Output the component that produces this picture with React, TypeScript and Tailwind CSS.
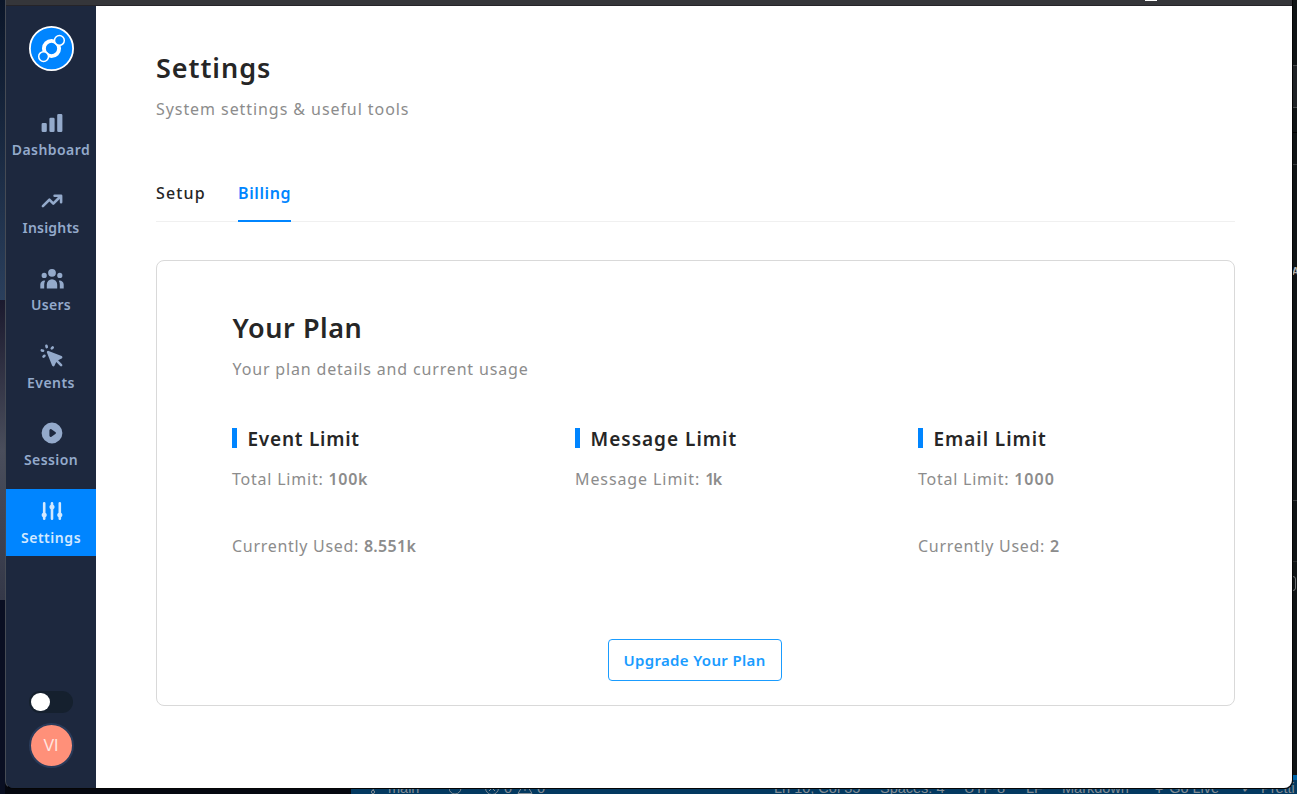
import type { IconType } from "react-icons";
import {
  HiAdjustments,
  HiChartBar,
  HiCursorClick,
  HiPlay,
  HiTrendingUp,
  HiUserGroup,
} from "react-icons/hi";

type NavEntry = { label: string; icon: IconType; tracking: string; active?: boolean };

const nav: NavEntry[] = [
  { label: "Dashboard", icon: HiChartBar, tracking: "tracking-[0.45px]" },
  { label: "Insights", icon: HiTrendingUp, tracking: "tracking-[0.2px]" },
  { label: "Users", icon: HiUserGroup, tracking: "tracking-[0.25px]" },
  { label: "Events", icon: HiCursorClick, tracking: "tracking-[0.45px]" },
  { label: "Session", icon: HiPlay, tracking: "tracking-[0.4px]" },
  { label: "Settings", icon: HiAdjustments, tracking: "tracking-[0.55px]", active: true },
];

function Logo() {
  return (
    <svg className="size-[45px] shrink-0" viewBox="0 0 45 45">
      <circle cx="22.5" cy="22.5" r="21.6" fill="#0085ff" stroke="#fff" strokeWidth="1.8" />
      <circle cx="22.5" cy="22.5" r="7.6" fill="none" stroke="#fff" strokeWidth="3.9" />
      <circle cx="30.4" cy="14.4" r="4.9" fill="#0085ff" stroke="#fff" strokeWidth="1.5" />
      <circle cx="14.6" cy="30.6" r="4.9" fill="#0085ff" stroke="#fff" strokeWidth="1.5" />
    </svg>
  );
}

function NavItem({ label, icon: Icon, tracking, active }: NavEntry) {
  return (
    <a
      className={`flex h-[67px] w-full flex-col items-center pt-[9px] ${
        active ? "bg-[#0085ff] text-[#d3e9ff]" : "text-[#94aacb]"
      }`}
    >
      <Icon className="ml-px size-[26px] shrink-0" />
      <span className={`mt-1 text-sm leading-5 font-semibold whitespace-nowrap ${tracking}`}>
        {label}
      </span>
    </a>
  );
}

function Sidebar() {
  return (
    <aside className="flex w-[90px] shrink-0 flex-col items-center rounded-bl-lg bg-[#1d283e] pt-5">
      <Logo />
      <nav className="mt-[30px] flex w-full flex-col gap-[10.6px]">
        {nav.map((item) => (
          <NavItem key={item.label} {...item} />
        ))}
      </nav>
      <div className="mt-auto mb-5 flex flex-col items-center gap-[10px]">
        <div className="flex h-[22px] w-11 items-center rounded-full bg-[#15202e] pl-[2px]">
          <div className="size-[18.5px] rounded-full bg-white" />
        </div>
        <div className="flex size-[45px] items-center justify-center rounded-full border-2 border-[#293b5a] bg-[#ff9079] font-['Liberation_Sans'] text-base text-[#ffe6e0]">
          VI
        </div>
      </div>
    </aside>
  );
}

type Line = { label: string; labelTracking: string; value: string; valueTracking: string };
type Limit = { title: string; titleTracking: string; lines: Line[] };

const limits: Limit[] = [
  {
    title: "Event Limit",
    titleTracking: "tracking-[0.76px]",
    lines: [
      { label: "Total Limit: ", labelTracking: "tracking-[0.78px]", value: "100k", valueTracking: "tracking-[0.7px]" },
      { label: "Currently Used: ", labelTracking: "tracking-[0.7px]", value: "8.551k", valueTracking: "tracking-[0.3px]" },
    ],
  },
  {
    title: "Message Limit",
    titleTracking: "tracking-[1px]",
    lines: [
      { label: "Message Limit: ", labelTracking: "tracking-[0.9px]", value: "1k", valueTracking: "tracking-[-1.5px]" },
    ],
  },
  {
    title: "Email Limit",
    titleTracking: "tracking-[0.95px]",
    lines: [
      { label: "Total Limit: ", labelTracking: "tracking-[0.76px]", value: "1000", valueTracking: "tracking-[1px]" },
      { label: "Currently Used: ", labelTracking: "tracking-[0.7px]", value: "2", valueTracking: "tracking-[0.3px]" },
    ],
  },
];

function LimitColumn({ title, titleTracking, lines }: Limit) {
  return (
    <div className="flex flex-col">
      <div className="flex gap-[10.5px]">
        <div className="h-5 w-[5px] bg-[#0085ff]" />
        <h3 className={`-mb-1 pt-px text-[19px] leading-5 font-semibold text-[#262626] ${titleTracking}`}>{title}</h3>
      </div>
      <div className="mt-[19px] flex flex-col gap-[43px]">
        {lines.map((line) => (
          <p key={line.label} className="text-base leading-6 whitespace-pre text-[#8c8c8c]">
            <span className={line.labelTracking}>{line.label}</span>
            <span className={`font-semibold ${line.valueTracking}`}>{line.value}</span>
          </p>
        ))}
      </div>
    </div>
  );
}

function Settings() {
  return (
    <main className="flex grow flex-col rounded-br-lg bg-white pt-11 pr-[57px] pl-[60px]">
      <h1 className="text-[27px] leading-9 font-semibold tracking-[0.95px] text-[#262626]">Settings</h1>
      <p className="mt-[11px] text-base leading-6 tracking-[0.93px] text-[#8c8c8c]">System settings &amp; useful tools</p>

      <div className="mt-[60px] flex gap-[33px] border-b border-[#f0f0f0] text-base leading-6">
        <div className="w-[49px] pb-4 font-medium tracking-[1.15px] text-[#262626]">Setup</div>
        <div className="-mb-px h-[41px] w-[53px] border-b-2 border-[#0085ff] font-semibold tracking-[0.6px] text-[#0085ff]">
          Billing
        </div>
      </div>

      <section className="mt-[38px] flex h-[446px] flex-col rounded-lg border border-[#d9d9d9] px-[75px] pt-[49px]">
        <h2 className="pl-[0.6px] text-[27px] leading-9 font-semibold tracking-[0.55px] text-[#262626]">Your Plan</h2>
        <p className="mt-[11px] pl-[0.6px] text-base leading-6 tracking-[0.83px] text-[#8c8c8c]">
          Your plan details and current usage
        </p>
        <div className="mt-[47px] grid grid-cols-[343px_343px_auto]">
          {limits.map((limit) => (
            <LimitColumn key={limit.title} {...limit} />
          ))}
        </div>
        <button className="mt-auto mr-[2px] mb-6 flex h-[42px] w-[174px] items-center justify-center self-center rounded border border-[#1a9cff] text-[15px] font-semibold tracking-[0.34px] whitespace-nowrap text-[#1a9cff]">
          Upgrade Your Plan
        </button>
      </section>
    </main>
  );
}

function EditorBackdrop() {
  return (
    <>
      <div className="absolute top-0 left-0 h-[300px] w-[5px] bg-linear-to-b from-[#0b1629] to-[#2a3f5c]" />
      <div className="absolute top-[300px] left-0 h-[300px] w-[5px] bg-linear-to-b from-[#1b1a2e] via-[#4a4e5c] to-[#343848]" />
      <div className="absolute top-[600px] left-0 h-[194px] w-[5px] bg-[#0a0f22]" />
      <div className="absolute top-0 right-0 h-[775px] w-1 bg-[#101415]" />
      <div className="absolute top-[65px] right-0 h-[43px] w-1 border-y border-[#4a4c4e] bg-[#1f2225]" />
      <div className="absolute top-[132px] right-0 h-px w-1 bg-black" />
      <div className="absolute top-[164px] right-0 h-px w-1 bg-[#3a3c3e]" />
      <div className="absolute top-[265px] left-[1292px] text-[10px] leading-3 font-bold text-[#b0b0b0]">A</div>
      <div className="absolute top-[500px] right-0 h-px w-1 bg-[#3a3c3e]" />
      <div className="absolute top-[561px] right-0 h-px w-1 bg-[#2a2c2e]" />
      <div className="absolute top-[576px] left-[1290px] h-[15px] w-[6px] rounded-sm border border-[#707274]" />
      <div className="absolute top-[775px] right-0 h-[19px] w-1 bg-[#0064a8]" />
      <div className="absolute top-[780px] left-[351px] h-[14px] w-[946px] bg-[#033960] font-['Liberation_Sans'] text-[14.5px] text-[#828c94]">
        <div className="flex h-4 items-center leading-4 whitespace-nowrap">
          <svg className="ml-[18px] size-4" viewBox="0 0 16 16" fill="none" stroke="currentColor">
            <circle cx="4" cy="12" r="1.6" />
            <path d="M4 10c0-3 7-1 8-6" />
          </svg>
          <span className="ml-[3px] w-[61px]">main</span>
          <svg className="size-3.5" viewBox="0 0 14 14" fill="none" stroke="currentColor">
            <circle cx="6" cy="7" r="6" />
          </svg>
          <svg className="ml-[21px] size-4" viewBox="0 0 16 16" fill="none" stroke="currentColor">
            <circle cx="8" cy="8" r="6.5" />
            <path d="m5 5 6 6m0-6-6 6" />
          </svg>
          <span className="ml-1 w-[13px]">0</span>
          <svg className="size-4" viewBox="0 0 16 16" fill="none" stroke="currentColor">
            <path d="M1 13.5 8 2l7 11.500zM8 6v5" />
          </svg>
          <span className="ml-1 w-[237px]">0</span>
          <span className="w-[106px]">Ln 10, Col 35</span>
          <span className="w-[84px]">Spaces: 4</span>
          <span className="w-[62px]">UTF-8</span>
          <span className="w-[36px]">LF</span>
          <span className="w-[91px]">Markdown</span>
          <span className="w-[88px]">Ψ Go Live</span>
          <span className="w-5">✓</span>
          <span>Pretti</span>
        </div>
      </div>
    </>
  );
}

export default function App() {
  return (
    <div className="relative h-[794px] w-[1297px] overflow-hidden bg-[#05070f] font-['Noto_Sans',sans-serif]">
      <EditorBackdrop />
      <div className="absolute top-0 left-[5px] flex h-[789px] w-[1288px] flex-col rounded-b-lg border-r border-b border-l border-r-[#050505] border-b-[#050505] border-l-[#464b54] bg-[#1d283e]">
        <div className="flex h-[6px] shrink-0 justify-end border-b border-[#252429] bg-[#35363a]">
          <div className="mr-[135px] h-px w-3 bg-white" />
        </div>
        <div className="flex grow rounded-b-lg">
          <Sidebar />
          <Settings />
        </div>
      </div>
    </div>
  );
}
